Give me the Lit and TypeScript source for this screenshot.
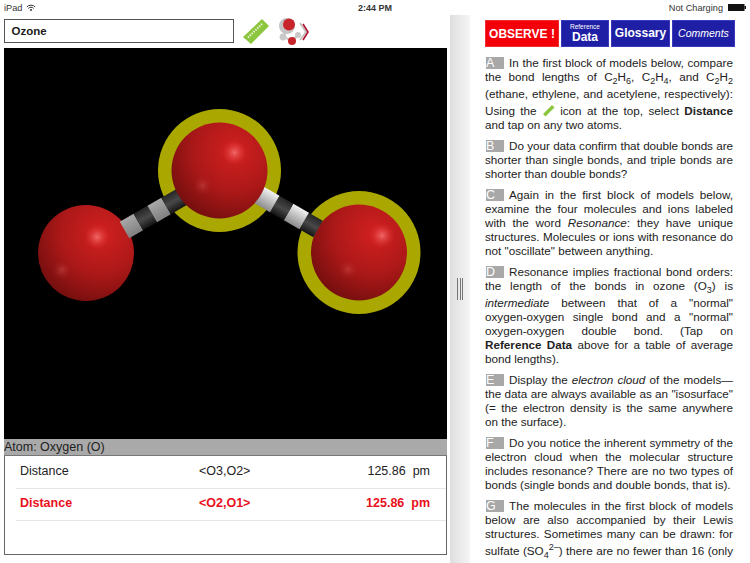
import { LitElement, html, css, svg } from "lit";
import { customElement } from "lit/decorators.js";

const sub = (s: string) => html`<sub>${s}</sub>`;

const ring = (cx: number, cy: number) => svg`<circle cx=${cx} cy=${cy} r="61.5" fill="#aaa800" />`;

// shine and glow are offsets from the centre, they differ per atom
const ball = (cx: number, cy: number, shine: number[], glow: number[]) => svg`
  <circle cx=${cx} cy=${cy} r="48" fill="url(#ball)" />
  <circle cx=${cx + shine[0]} cy=${cy + shine[1]} r="13" fill="url(#shine)" />
  <circle cx=${cx + glow[0]} cy=${cy + glow[1]} r="10" fill="url(#glow)" />
`;

// x runs along the bond, from its free end at 0 to the end hidden under the ball
const bond = (x: number, y: number, angle: number, dir: number, segs: [number, number, string][]) => svg`
  <g transform="translate(${x} ${y}) rotate(${angle})">
    ${segs.map(
      ([a, b, fill]) => svg`<rect x=${dir > 0 ? a : -b} y="-9.5" width=${b - a} height="19" fill=${fill} />`
    )}
  </g>
`;

@customElement("app-root")
export class AppRoot extends LitElement {
  static styles = css`
    :host {
      display: block;
      width: 750px;
      height: 563px;
      overflow: hidden;
      background: #fff;
      font-family: "Liberation Sans", Arial, sans-serif;
      color: #1c1c1c;
    }
    .status {
      height: 15px;
      display: grid;
      grid-template-columns: 1fr auto 1fr;
      align-items: center;
      padding: 0 4px;
      font-size: 9.2px;
      color: #333;
    }
    .status .left {
      display: flex;
      align-items: center;
      gap: 4px;
    }
    .status .time {
      font-weight: bold;
      font-size: 9px;
    }
    .status .right {
      display: flex;
      justify-content: flex-end;
      align-items: center;
      gap: 5px;
    }
    .main {
      display: flex;
      height: 548px;
    }
    .left-pane {
      width: 450px;
      padding: 4px 3px 0 4px;
      box-sizing: border-box;
    }
    .toolbar {
      display: flex;
      align-items: center;
      height: 24px;
      margin-bottom: 5px;
    }
    .name {
      width: 230px;
      height: 24px;
      box-sizing: border-box;
      border: 1px solid #555;
      padding: 0 6.5px;
      display: flex;
      align-items: center;
      font-weight: bold;
      font-size: 11.5px;
    }
    .ruler,
    .model {
      margin-left: 9px;
      flex: none;
    }
    .viewer {
      display: block;
      width: 443px;
      height: 391px;
      background: #000;
    }
    .atom-label {
      height: 17px;
      line-height: 16px;
      width: 443px;
      background: #a9a9a9;
      border-bottom: 1px solid #777;
      box-sizing: border-box;
      font-size: 12.5px;
      color: #222;
    }
    .table {
      width: 443px;
      height: 99px;
      box-sizing: border-box;
      border: 1px solid #666;
      border-top: 0;
      padding: 1px 0 0 11px;
    }
    .row {
      height: 32px;
      box-sizing: border-box;
      border-bottom: 1px solid #e6e6e6;
      display: grid;
      grid-template-columns: 179px 1fr 110px;
      align-items: center;
      font-size: 12.5px;
      color: #222;
      padding: 0 16px 3px 4px;
    }
    .row.sel {
      color: #e8101c;
      font-weight: bold;
    }
    .row .val {
      text-align: right;
      white-space: pre;
    }
    .divider {
      width: 20px;
      flex: none;
      background: linear-gradient(to right, #dedede, #f5f5f5);
      display: flex;
      align-items: center;
      justify-content: center;
      gap: 1.5px;
    }
    .divider i {
      width: 1px;
      height: 22px;
      background: #777;
    }
    .right-pane {
      flex: 1;
      padding: 5px 15px 0 15px;
      overflow: hidden;
    }
    .buttons {
      display: flex;
      gap: 2px;
      height: 27px;
      margin-bottom: 9px;
    }
    .btn {
      box-sizing: border-box;
      background: #1f1fa6;
      color: #fff;
      display: flex;
      flex-direction: column;
      align-items: center;
      justify-content: center;
      font-weight: bold;
      border: 1px solid #3a3ac0;
    }
    .observe {
      width: 74px;
      background: #f40009;
      border-color: #ee3030;
      font-size: 12px;
    }
    .ref {
      width: 48px;
    }
    .ref small {
      font-size: 6.5px;
      font-weight: normal;
      line-height: 8px;
    }
    .ref span {
      font-size: 12px;
      line-height: 13px;
    }
    .glossary {
      width: 59px;
      font-size: 12px;
      padding-bottom: 2px;
    }
    .comments {
      width: 63px;
      font-size: 10.5px;
      font-style: italic;
      font-weight: normal;
      padding-bottom: 2px;
    }
    .notes {
      width: 248px;
      font-size: 11.7px;
      color: #222;
    }
    .notes p {
      margin: 0 0 7px;
    }
    .l {
      display: block;
      height: 14px;
      line-height: 14px;
      text-align: justify;
      text-align-last: justify;
    }
    .l.end {
      text-align-last: left;
    }
    .l.below {
      padding-bottom: 3px;
    }
    .l.above {
      padding-top: 3px;
    }
    .l.tight {
      letter-spacing: -0.06px;
    }
    .tag {
      display: inline-block;
      width: 18px;
      height: 12px;
      line-height: 12px;
      background: #a8a8a8;
      color: #fff;
      text-align: center;
      font-size: 12.5px;
      margin: 0 5px 0 1px;
    }
    sub,
    sup {
      font-size: 9px;
      line-height: 0;
    }
    .inline-ruler {
      vertical-align: -2px;
    }
  `;

  render() {
    return html`
      <div class="status">
        <div class="left">
          <span>iPad</span>
          <svg width="10" height="8" viewBox="0 0 12 9" fill="none" stroke="#333" stroke-width="1.2">
            <path d="M1 3.2a7 7 0 0 1 10 0M2.8 5a4.4 4.4 0 0 1 6.4 0" />
            <path d="M6 8.5 4.4 6.6a2.2 2.2 0 0 1 3.2 0z" fill="#333" stroke="none" />
          </svg>
        </div>
        <div class="time">2:44 PM</div>
        <div class="right">
          <span>Not Charging</span>
          <svg width="18" height="7" viewBox="0 0 18 7">
            <rect x="0" y="0" width="16.5" height="7" fill="#111" />
            <rect x="16.5" y="2" width="1.5" height="3" fill="#111" />
          </svg>
        </div>
      </div>
      <div class="main">
        <div class="left-pane">
          <div class="toolbar">
            <div class="name">Ozone</div>
            <svg class="ruler" width="27" height="27" viewBox="0 0 27 27">
              <path d="M0 19 19 1l7 7L8 26z" fill="#8cc63f" />
              <path d="M5 19.5 19.5 5.5" stroke="#eef6dc" stroke-width="2" stroke-dasharray="1.4 1.2" />
            </svg>
            ${this.renderModelIcon()}
          </div>
          ${this.renderViewer()}
          <div class="atom-label">Atom: Oxygen (O)</div>
          <div class="table">
            <div class="row">
              <span>Distance</span><span>&lt;O3,O2&gt;</span><span class="val">125.86  pm</span>
            </div>
            <div class="row sel">
              <span>Distance</span><span>&lt;O2,O1&gt;</span><span class="val">125.86  pm</span>
            </div>
          </div>
        </div>
        <div class="divider"><i></i><i></i><i></i></div>
        <div class="right-pane">
          <div class="buttons">
            <div class="btn observe">OBSERVE !</div>
            <div class="btn ref"><small>Reference</small><span>Data</span></div>
            <div class="btn glossary">Glossary</div>
            <div class="btn comments">Comments</div>
          </div>
          ${this.renderNotes()}
        </div>
      </div>
    `;
  }

  renderModelIcon() {
    return html`
      <svg class="model" width="32" height="30" viewBox="0 0 32 30">
        <path d="M21 7 27 16 21 24" fill="none" stroke="#bdbdbd" stroke-width="1.6" />
        <path d="M24 8 29 16 24 24" fill="none" stroke="#b01030" stroke-width="1.6" />
        <path d="M6 14 5 21 13 25 19 19" stroke="#cfcfcf" stroke-width="2.5" fill="none" />
        <circle cx="8" cy="10" r="8" fill="#c4c4c4" />
        <circle cx="10" cy="8.5" r="6" fill="#c8242c" />
        <circle cx="4" cy="21" r="3.4" fill="#c9c9c9" />
        <circle cx="19" cy="19" r="3" fill="#c9c9c9" />
        <circle cx="13" cy="25" r="4" fill="#c8242c" />
      </svg>
    `;
  }

  renderViewer() {
    const grey = "url(#grey)";
    const white = "url(#white)";
    const dark = "url(#dark)";
    return svg`
      <svg class="viewer" viewBox="0 0 443 391">
        <defs>
          <radialGradient id="ball" cx="0.66" cy="0.3" r="0.85">
            <stop offset="0" stop-color="#d22020" />
            <stop offset="0.5" stop-color="#ac1818" />
            <stop offset="1" stop-color="#660c0c" />
          </radialGradient>
          <radialGradient id="shine">
            <stop offset="0" stop-color="#f47070" stop-opacity="0.9" />
            <stop offset="1" stop-color="#e02a2a" stop-opacity="0" />
          </radialGradient>
          <radialGradient id="glow">
            <stop offset="0" stop-color="#d86060" stop-opacity="0.4" />
            <stop offset="1" stop-color="#b02020" stop-opacity="0" />
          </radialGradient>
          <linearGradient id="dark" x1="0" y1="0" x2="0" y2="1">
            <stop offset="0" stop-color="#262626" />
            <stop offset="0.5" stop-color="#484848" />
            <stop offset="1" stop-color="#141414" />
          </linearGradient>
          <linearGradient id="grey" x1="0" y1="0" x2="0" y2="1">
            <stop offset="0" stop-color="#a8a8a8" />
            <stop offset="1" stop-color="#808080" />
          </linearGradient>
          <linearGradient id="white" x1="0" y1="0" x2="0" y2="1">
            <stop offset="0" stop-color="#f2f2f2" />
            <stop offset="1" stop-color="#8c8c8c" />
          </linearGradient>
        </defs>
        ${ring(355, 204.5)}
        ${ring(215.5, 122.5)}
        ${ball(82, 205, [11, -16], [-24, 17])}
        ${ball(355, 204.5, [23, -17], [-11, 17])}
        ${bond(120.5, 182, -30, 1, [[0, 16, grey], [16, 32, dark], [32, 48, grey], [48, 72, dark]])}
        ${bond(314, 181, 30, -1, [[0, 16, dark], [16, 34, white], [34, 50, dark], [50, 78, white]])}
        ${ball(215.5, 122.5, [15, -18], [-17, 15])}
      </svg>
    `;
  }

  renderNotes() {
    return html`
      <div class="notes">
        <p>
          <span class="l"><span class="tag">A</span>In the first block of models below, compare</span>
          <span class="l below">the bond lengths of C${sub("2")}H${sub("6")}, C${sub("2")}H${sub("4")}, and C${sub("2")}H${sub("2")}</span>
          <span class="l">(ethane, ethylene, and acetylene, respectively):</span>
          <span class="l above">Using the
            <svg class="inline-ruler" width="13" height="13" viewBox="0 0 13 13"><path d="M1 10 10 1l2.5 2.5-9 9z" fill="#8cc63f" /></svg>
            icon at the top, select <b>Distance</b></span>
          <span class="l end">and tap on any two atoms.</span>
        </p>
        <p>
          <span class="l tight"><span class="tag">B</span>Do your data confirm that double bonds are</span>
          <span class="l">shorter than single bonds, and triple bonds are</span>
          <span class="l end">shorter than double bonds?</span>
        </p>
        <p>
          <span class="l"><span class="tag">C</span>Again in the first block of models below,</span>
          <span class="l">examine the four molecules and ions labeled</span>
          <span class="l">with the word <i>Resonance</i>: they have unique</span>
          <span class="l">structures. Molecules or ions with resonance do</span>
          <span class="l end">not "oscillate" between anything.</span>
        </p>
        <p>
          <span class="l"><span class="tag">D</span>Resonance implies fractional bond orders:</span>
          <span class="l below">the length of the bonds in ozone (O${sub("3")}) is</span>
          <span class="l"><i>intermediate</i> between that of a "normal"</span>
          <span class="l">oxygen-oxygen single bond and a "normal"</span>
          <span class="l">oxygen-oxygen double bond. (Tap on</span>
          <span class="l"><b>Reference Data</b> above for a table of average</span>
          <span class="l end">bond lengths).</span>
        </p>
        <p>
          <span class="l"><span class="tag">E</span>Display the <i>electron cloud</i> of the models—</span>
          <span class="l">the data are always available as an "isosurface"</span>
          <span class="l">(= the electron density is the same anywhere</span>
          <span class="l end">on the surface).</span>
        </p>
        <p>
          <span class="l"><span class="tag">F</span>Do you notice the inherent symmetry of the</span>
          <span class="l">electron cloud when the molecular structure</span>
          <span class="l">includes resonance? There are no two types of</span>
          <span class="l end">bonds (single bonds and double bonds, that is).</span>
        </p>
        <p>
          <span class="l"><span class="tag">G</span>The molecules in the first block of models</span>
          <span class="l">below are also accompanied by their Lewis</span>
          <span class="l">structures. Sometimes many can be drawn: for</span>
          <span class="l above">sulfate (SO${sub("4")}<sup>2–</sup>) there are no fewer than 16 (only</span>
        </p>
      </div>
    `;
  }
}
